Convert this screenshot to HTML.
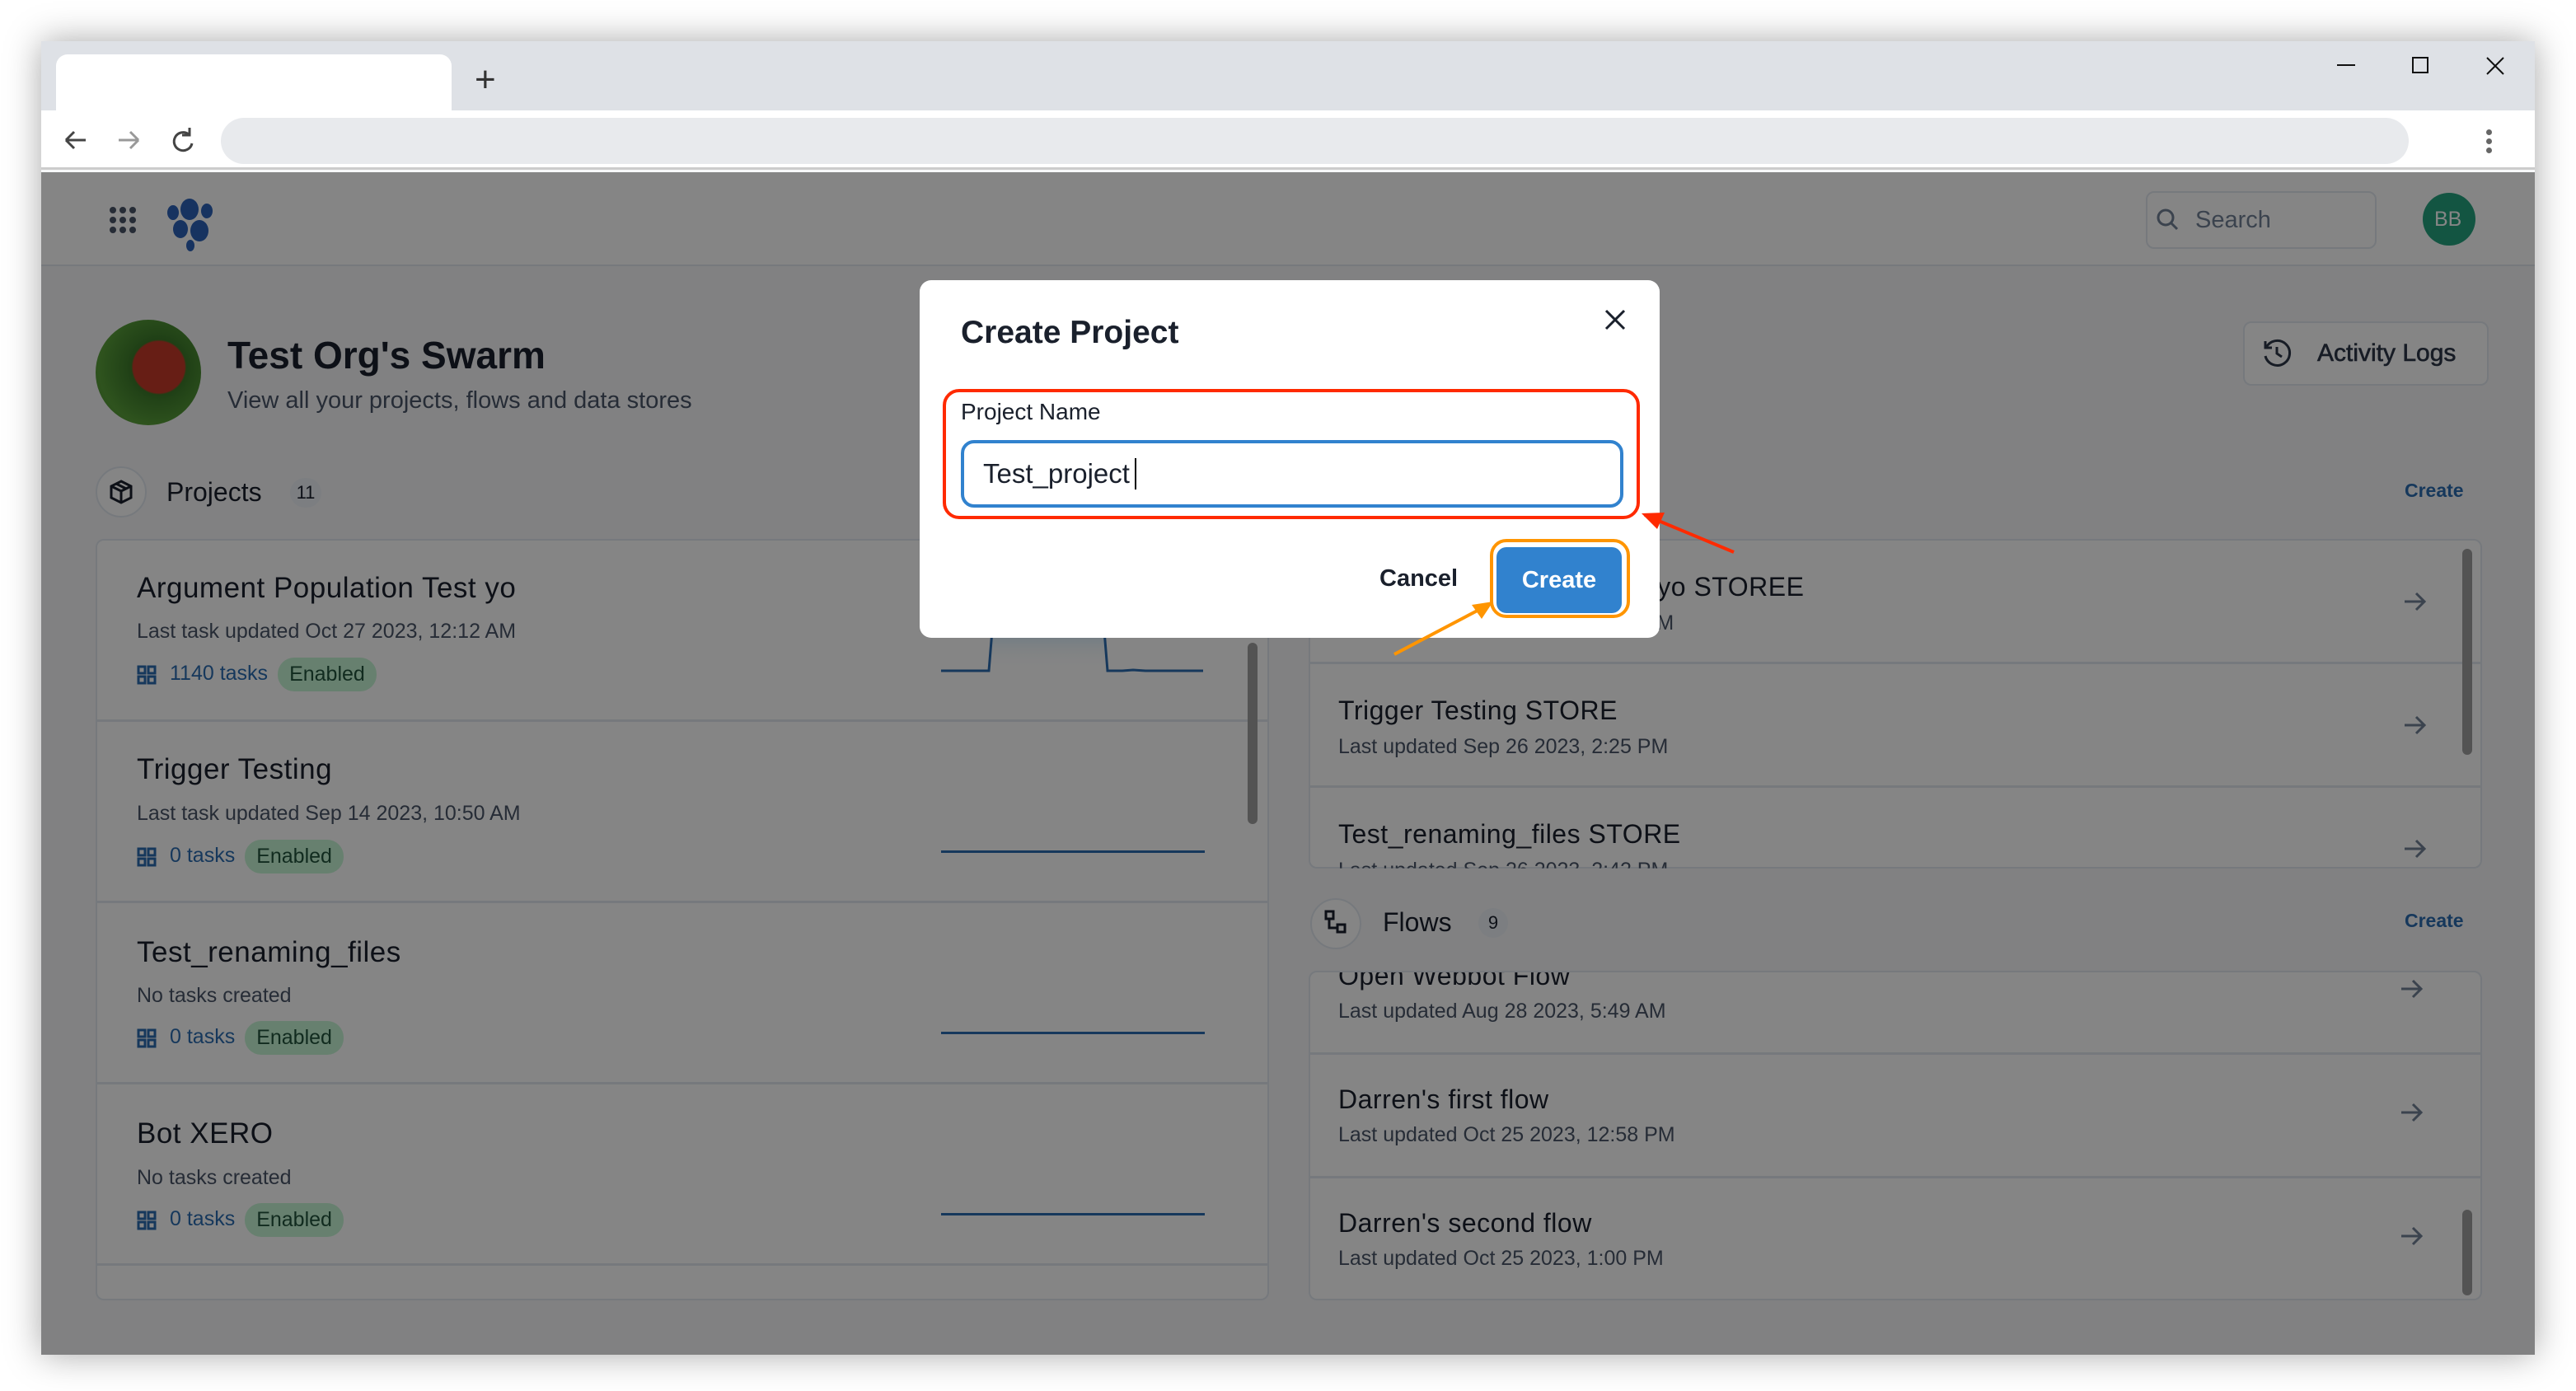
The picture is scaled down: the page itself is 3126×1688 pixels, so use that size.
<!DOCTYPE html>
<html><head><meta charset="utf-8">
<style>
*{margin:0;padding:0;box-sizing:border-box}
body{width:3126px;height:1688px;background:#fff;position:relative;overflow:hidden;font-family:"Liberation Sans",sans-serif;color:#1a202c}
.a{position:absolute}
.win{left:50px;top:50px;width:3026px;height:1594px;background:#f7f8f9;box-shadow:0 0 40px rgba(0,0,0,.35);overflow:hidden}
.t{position:absolute;white-space:nowrap}
.card{background:#fff;border:2px solid #e2e8f0;border-radius:10px;overflow:hidden}
.row{position:absolute;left:0;right:0;border-bottom:3px solid #e2e8f0}
.badge{display:inline-block;vertical-align:middle;background:#c6f6d5;color:#22543d;border-radius:20px;padding:6px 14px;font-size:25px;margin-left:12px}
.sub{color:#4a5568;font-size:25px}
.ttl{font-size:35px;letter-spacing:.5px;color:#1a202c}
.tk{font-size:25px;color:#2b6cb0}
.tk svg{vertical-align:middle;margin-right:16px}
</style></head><body>
<div class="a win">
 <div class="a" style="left:0;top:0;width:3026px;height:84px;background:#dee1e6"></div>
 <div class="a" style="left:18px;top:16px;width:480px;height:70px;background:#fff;border-radius:14px 14px 0 0"></div>
 <div class="t" style="left:526px;top:22px;font-size:44px;color:#333">+</div>
 <div class="a" style="left:2786px;top:28px;width:22px;height:2px;background:#111"></div>
 <div class="a" style="left:2877px;top:19px;width:20px;height:20px;border:2px solid #111"></div>
 <svg class="a" style="left:2966px;top:18px" width="24" height="24"><path d="M2 2L22 22M22 2L2 22" stroke="#111" stroke-width="2"/></svg>
 <div class="a" style="left:0;top:84px;width:3026px;height:72px;background:#fff;border-bottom:3px solid #ccc"></div>
 <svg class="a" style="left:26px;top:104px" width="180" height="40" fill="none" stroke-width="3"><path d="M4 16H28M4 16L14 6M4 16L14 26" stroke="#444"/><path d="M68 16H92M92 16L82 6M92 16L82 26" stroke="#999"/><path d="M153 9A11 11 0 1 0 157 20M154 1V10H145" stroke="#444"/></svg>
 <div class="a" style="left:218px;top:93px;width:2655px;height:56px;background:#e8eaed;border-radius:28px"></div>
 <div class="a" style="left:2967px;top:107px;width:7px;height:7px;border-radius:50%;background:#666;box-shadow:0 11px 0 #666,0 22px 0 #666"></div>
 <div class="a" style="left:0;top:159px;width:3026px;height:114px;background:#fff;border-bottom:2px solid #e2e8f0"></div>
 <svg class="a" style="left:82px;top:200px" width="36" height="36" fill="#4a5568"><circle cx="5" cy="5" r="4"/><circle cx="17" cy="5" r="4"/><circle cx="29" cy="5" r="4"/><circle cx="5" cy="17" r="4"/><circle cx="17" cy="17" r="4"/><circle cx="29" cy="17" r="4"/><circle cx="5" cy="29" r="4"/><circle cx="17" cy="29" r="4"/><circle cx="29" cy="29" r="4"/></svg>
 <svg class="a" style="left:152px;top:190px" width="60" height="66" fill="#2c63b8"><ellipse cx="8" cy="18" rx="7" ry="9"/><ellipse cx="28" cy="14" rx="11" ry="13"/><ellipse cx="49" cy="16" rx="7" ry="9"/><ellipse cx="17" cy="38" rx="9" ry="11"/><ellipse cx="40" cy="40" rx="11" ry="13"/><ellipse cx="29" cy="58" rx="5" ry="7"/></svg>
 <div class="a" style="left:2554px;top:182px;width:280px;height:70px;border:2px solid #e2e8f0;border-radius:10px"></div>
 <svg class="a" style="left:2566px;top:202px" width="30" height="30" fill="none" stroke="#718096" stroke-width="3"><circle cx="12" cy="12" r="9"/><path d="M19 19L26 26"/></svg>
 <div class="t" style="left:2614px;top:201px;font-size:29px;color:#718096">Search</div>
 <div class="a" style="top:184px;width:64px;height:64px;border-radius:50%;background:#25a37f;left:2890px"></div>
 <div class="t" style="left:2904px;top:202px;font-size:25px;color:#fff">BB</div>
 <div class="a" style="left:66px;top:338px;width:128px;height:128px;border-radius:50%;background:radial-gradient(circle at 60% 45%,#c53b2a 0 30%,#3c7a2a 32%,#5aa03a 70%,#3d7a2a)"></div>
 <div class="t" style="left:226px;top:354px;font-size:46px;font-weight:bold">Test Org's Swarm</div>
 <div class="t" style="left:226px;top:420px;font-size:29px;color:#4a5568">View all your projects, flows and data stores</div>
 <div class="a" style="top:340px;width:298px;height:78px;border:2px solid #e2e8f0;border-radius:10px;background:#fff;left:2672px"></div>
 <svg class="a" style="left:2694px;top:360px" width="38" height="38" fill="none" stroke="#2d3748" stroke-width="3"><path d="M6 12A15 15 0 1 1 5 22M5 4V12H13M19 11V19L25 23"/></svg>
 <div class="t" style="left:2762px;top:362px;font-size:30px;color:#2d3748;-webkit-text-stroke:.6px #2d3748">Activity Logs</div>
 <div class="a" style="left:66px;top:516px;width:62px;height:62px;border-radius:50%;border:2px solid #e2e8f0;background:#fff"></div>
 <svg class="a" style="left:82px;top:532px" width="30" height="30" fill="none" stroke="#1a202c" stroke-width="3"><path d="M15 2L27 8V22L15 28L3 22V8ZM3 8L15 14L27 8M15 14V28M9 5L21 11"/></svg>
 <div class="t" style="left:152px;top:529px;font-size:32px">Projects</div>
 <div class="a" style="left:302px;top:530px;width:38px;height:36px;border-radius:18px;background:#edf2f7;text-align:center;font-size:22px;line-height:36px">11</div>
 <div class="a card" style="left:66px;top:604px;width:1424px;height:924px">
  <div class="row" style="top:0;height:220px"></div>
  <div class="row" style="top:220px;height:220px"></div>
  <div class="row" style="top:440px;height:220px"></div>
  <div class="row" style="top:660px;height:220px"></div>
  <div class="a" style="left:1396px;top:124px;width:12px;height:220px;border-radius:6px;background:#a0a0a0"></div>
 </div>
 <div class="t ttl" style="left:116px;top:644px">Argument Population Test yo</div>
 <div class="t sub" style="left:116px;top:702px">Last task updated Oct 27 2023, 12:12 AM</div>
 <div class="t ttl" style="left:116px;top:864px">Trigger Testing</div>
 <div class="t sub" style="left:116px;top:923px">Last task updated Sep 14 2023, 10:50 AM</div>
 <div class="t ttl" style="left:116px;top:1086px">Test_renaming_files</div>
 <div class="t sub" style="left:116px;top:1144px">No tasks created</div>
 <div class="t ttl" style="left:116px;top:1306px">Bot XERO</div>
 <div class="t sub" style="left:116px;top:1365px">No tasks created</div>
 <svg width="0" height="0" style="position:absolute"><defs><g id="gi" fill="none" stroke="#2b6cb0" stroke-width="3"><rect x="2" y="2" width="8" height="8"/><rect x="14" y="2" width="8" height="8"/><rect x="2" y="14" width="8" height="8"/><rect x="14" y="14" width="8" height="8"/></g></defs></svg>
 <div class="t tk" style="left:116px;top:748px"><svg width="24" height="24"><use href="#gi"/></svg>1140 tasks<span class="badge">Enabled</span></div>
 <div class="t tk" style="left:116px;top:969px"><svg width="24" height="24"><use href="#gi"/></svg>0 tasks<span class="badge">Enabled</span></div>
 <div class="t tk" style="left:116px;top:1189px"><svg width="24" height="24"><use href="#gi"/></svg>0 tasks<span class="badge">Enabled</span></div>
 <div class="t tk" style="left:116px;top:1410px"><svg width="24" height="24"><use href="#gi"/></svg>0 tasks<span class="badge">Enabled</span></div>
 <svg class="a" style="left:1090px;top:651px" width="330" height="120"><defs><linearGradient id="g" x1="0" y1="0" x2="0" y2="1"><stop offset="0" stop-color="#90cdf4"/><stop offset="1" stop-color="#fff" stop-opacity="0"/></linearGradient></defs><path d="M60 110L66 40H198L204 110Z" fill="url(#g)"/><path d="M2 113H60L66 40H198L204 113H222L235 112L250 113H320" fill="none" stroke="#2b6cb0" stroke-width="3"/></svg>
 <div class="a" style="left:1092px;top:982px;width:320px;height:3px;background:#2b6cb0"></div>
 <div class="a" style="left:1092px;top:1202px;width:320px;height:3px;background:#2b6cb0"></div>
 <div class="a" style="left:1092px;top:1422px;width:320px;height:3px;background:#2b6cb0"></div>
 <div class="t" style="left:2868px;top:532px;font-size:23px;color:#2b6cb0;font-weight:bold">Create</div>
 <div class="a card" style="top:604px;width:1424px;height:400px;left:1538px">
  <div class="row" style="top:0;height:150px"></div>
  <div class="row" style="top:150px;height:150px"></div>
  <div class="a" style="left:1398px;top:10px;width:12px;height:250px;border-radius:6px;background:#a0a0a0"></div>
 </div>
 <div class="t ttl" style="left:1574px;top:644px;font-size:32px">Argument Population Test yo STOREE</div>
 <div class="t sub" style="left:1574px;top:692px">Last updated Oct 27 2023, 12:12 AM</div>
 <div class="t ttl" style="left:1574px;top:794px;font-size:32px">Trigger Testing STORE</div>
 <div class="t sub" style="left:1574px;top:842px">Last updated Sep 26 2023, 2:25 PM</div>
 <div class="t ttl" style="left:1574px;top:944px;font-size:32px">Test_renaming_files STORE</div>
 <div class="t sub" style="left:1574px;top:992px;clip-path:inset(0 0 60% 0)">Last updated Sep 26 2023, 2:42 PM</div>
 <svg width="0" height="0" style="position:absolute"><defs><path id="ar" d="M2 14H26M16 4L26 14L16 24" fill="none" stroke="#718096" stroke-width="3"/></defs></svg>
 <svg class="a" style="left:2866px;top:666px" width="30" height="30"><use href="#ar"/></svg>
 <svg class="a" style="left:2866px;top:816px" width="30" height="30"><use href="#ar"/></svg>
 <svg class="a" style="left:2866px;top:966px" width="30" height="30"><use href="#ar"/></svg>
 <div class="a" style="left:1540px;top:1040px;width:62px;height:62px;border-radius:50%;border:2px solid #e2e8f0;background:#fff"></div>
 <svg class="a" style="left:1556px;top:1054px" width="30" height="30" fill="none" stroke="#1a202c" stroke-width="3"><rect x="3" y="2" width="9" height="9"/><rect x="17" y="18" width="9" height="9"/><path d="M7 11V22H17"/></svg>
 <div class="t" style="left:1628px;top:1051px;font-size:32px">Flows</div>
 <div class="a" style="left:1744px;top:1052px;width:36px;height:36px;border-radius:18px;background:#edf2f7;text-align:center;font-size:22px;line-height:36px">9</div>
 <div class="t" style="left:2868px;top:1054px;font-size:23px;color:#2b6cb0;font-weight:bold">Create</div>
 <div class="a card" style="left:1538px;top:1128px;width:1424px;height:400px">
  <div class="row" style="top:-150px;height:250px"></div>
  <div class="row" style="top:100px;height:150px"></div>
  <div class="a" style="left:1398px;top:288px;width:12px;height:104px;border-radius:6px;background:#a0a0a0"></div>
 </div>
 <div class="t ttl" style="left:1574px;top:1116px;font-size:32px;clip-path:inset(14px 0 0 0)">Open Webbot Flow</div>
 <div class="t sub" style="left:1574px;top:1163px">Last updated Aug 28 2023, 5:49 AM</div>
 <div class="t ttl" style="left:1574px;top:1266px;font-size:32px">Darren's first flow</div>
 <div class="t sub" style="left:1574px;top:1313px">Last updated Oct 25 2023, 12:58 PM</div>
 <div class="t ttl" style="left:1574px;top:1416px;font-size:32px">Darren's second flow</div>
 <div class="t sub" style="left:1574px;top:1463px">Last updated Oct 25 2023, 1:00 PM</div>
 <svg class="a" style="left:2862px;top:1136px" width="30" height="30"><use href="#ar"/></svg>
 <svg class="a" style="left:2862px;top:1286px" width="30" height="30"><use href="#ar"/></svg>
 <svg class="a" style="left:2862px;top:1436px" width="30" height="30"><use href="#ar"/></svg>
 <div class="a" style="left:0;top:159px;width:3026px;height:1440px;background:rgba(0,0,0,.48)"></div>
 <div class="a" style="left:1066px;top:290px;width:898px;height:434px;background:#fff;border-radius:14px"></div>
 <div class="t" style="left:1116px;font-size:39px;font-weight:bold;top:332px">Create Project</div>
 <svg class="a" style="left:1896px;top:324px" width="28" height="28"><path d="M3 3L25 25M25 3L3 25" stroke="#1a202c" stroke-width="3"/></svg>
 <div class="a" style="left:1094px;top:422px;width:846px;height:158px;border:4px solid #ff2a00;border-radius:20px"></div>
 <div class="t" style="left:1116px;top:434px;font-size:28px;font-weight:500">Project Name</div>
 <div class="a" style="left:1116px;top:484px;width:804px;height:82px;border:4px solid #3182ce;border-radius:16px"></div>
 <div class="t" style="left:1143px;top:506px;font-size:33px">Test_project</div>
 <div class="a" style="left:1327px;top:506px;width:2px;height:38px;background:#000"></div>
 <div class="t" style="left:1624px;top:636px;font-size:29px;font-weight:bold">Cancel</div>
 <div class="a" style="left:1758px;top:604px;width:170px;height:96px;border:4px solid #ff9500;border-radius:20px"></div>
 <div class="a" style="left:1766px;top:614px;width:152px;height:80px;background:#3182ce;border-radius:12px;color:#fff;font-size:29px;font-weight:bold;text-align:center;line-height:80px">Create</div>
 <svg class="a" style="left:0;top:0" width="3026" height="1594"><g stroke-width="4" fill="none"><path d="M2054 620L1946 575" stroke="#ff2a00"/><path d="M1642 744L1756 684" stroke="#ff9500"/></g><path d="M1942 573L1970 572L1961 592Z" fill="#ff2a00"/><path d="M1762 680L1748 701L1736 684Z" fill="#ff9500"/></svg>
</div>
</body></html>
